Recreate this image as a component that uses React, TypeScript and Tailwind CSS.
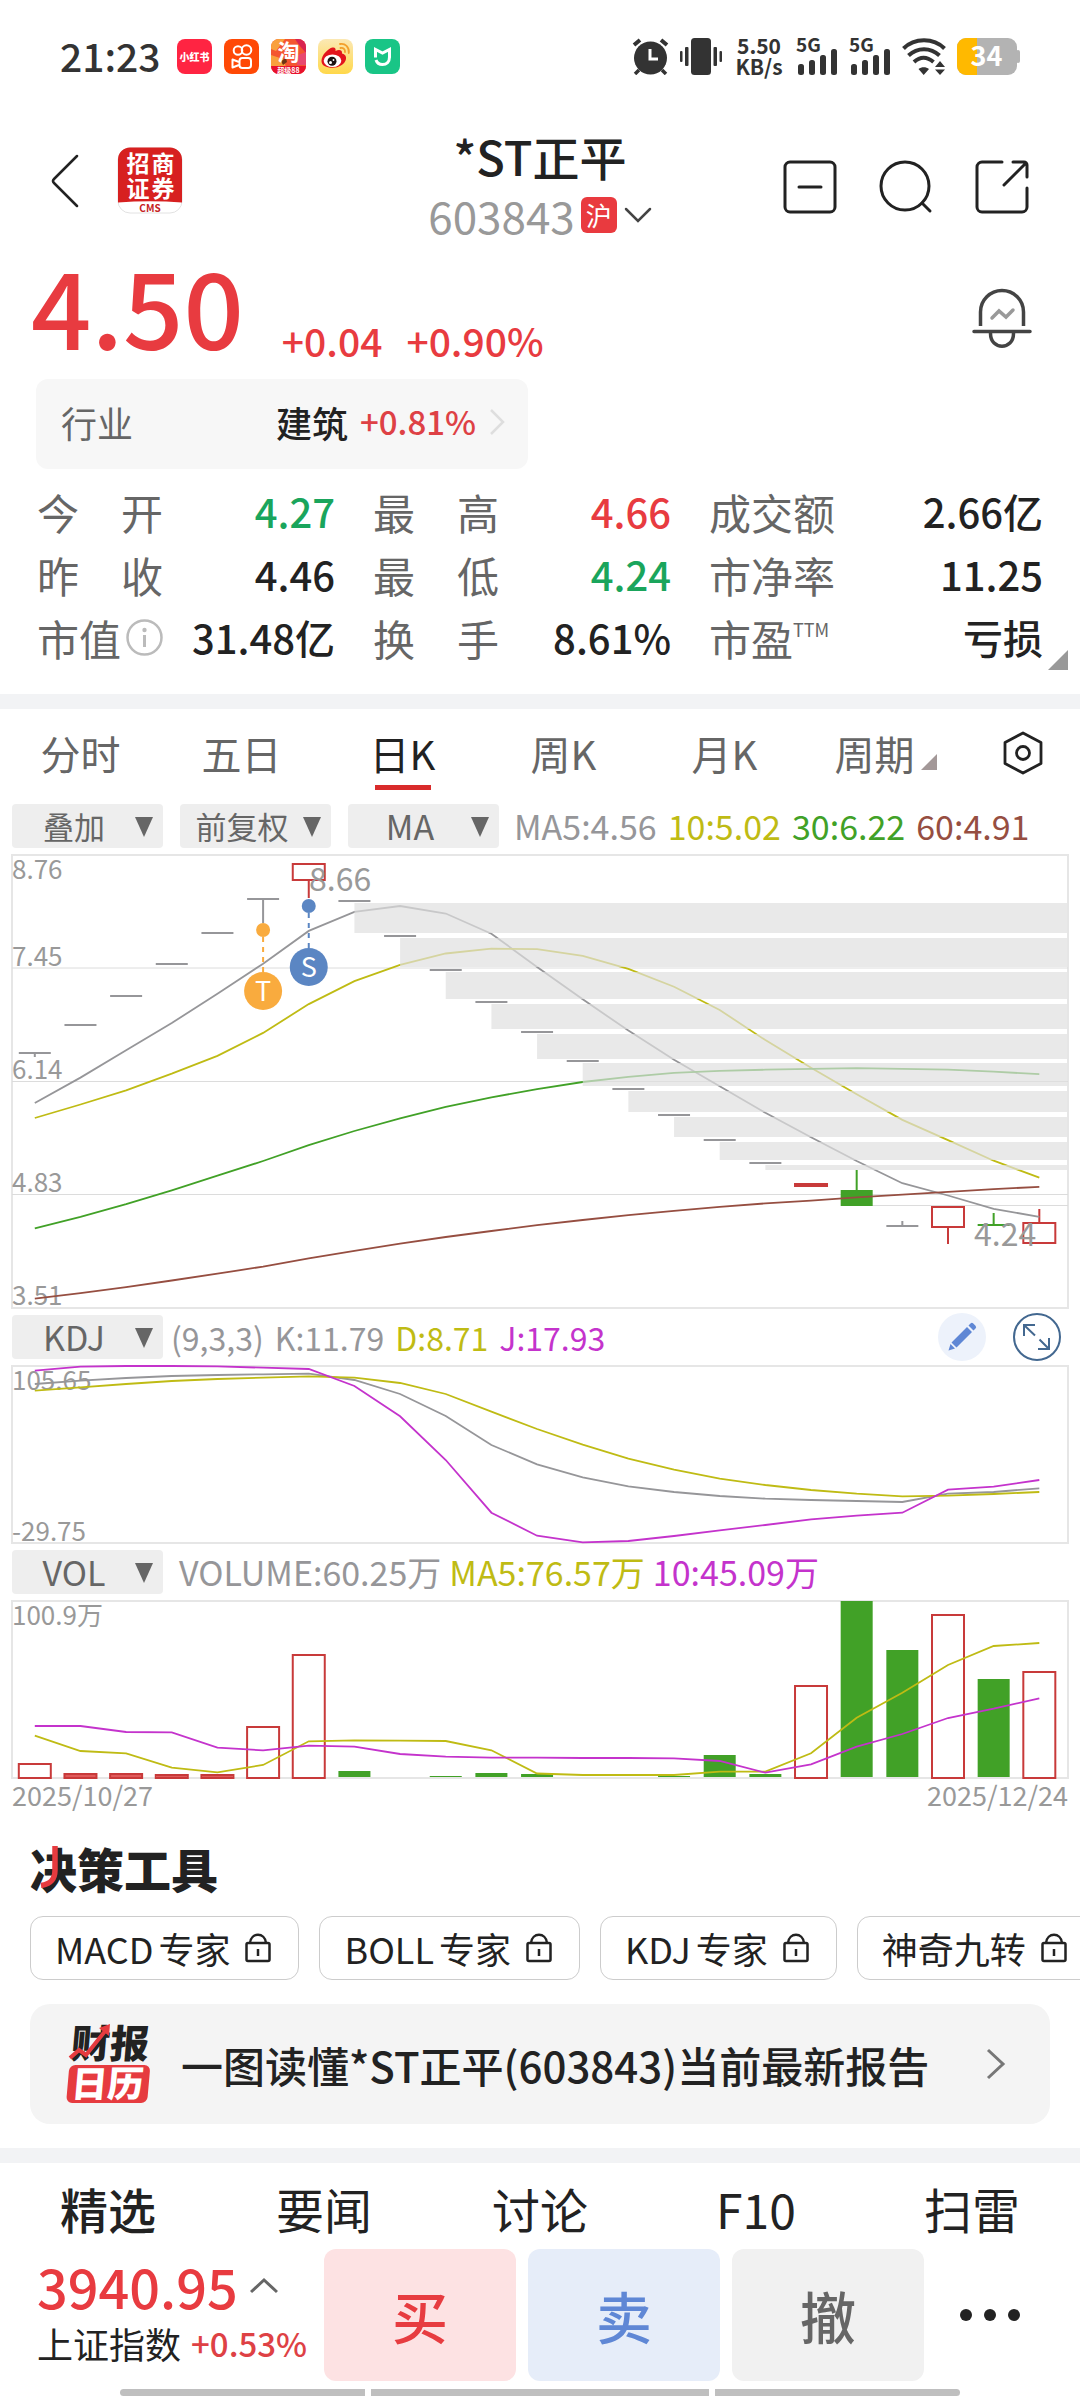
import { useState } from "react";
import type { ReactNode } from "react";

const GRAY = "#969699";
const YELLOW = "#bfbb14";
const GREEN = "#41a127";
const BROWN = "#964e41";
const PURPLE = "#c433cc";
const RED = "#c83a3a";

// Every panel shares the same 23 columns
const colX = (i: number) => 22.8 + i * 45.66;
const toPoints = (ys: number[]) => ys.map((y, i) => `${colX(i)},${y}`).join(" ");

const MA5 = [248, 222.6, 195.3, 168, 138.8, 108.7, 75.9, 56.9, 51, 58.5, 78.7, 111.9, 144.3, 175.6, 204.8, 231.3, 257.8, 282.3, 306, 328.2, 340.5, 353.9, 361.8];
const MA10 = [263, 249.5, 235.3, 218.7, 200.9, 177.9, 149.1, 126.1, 109.9, 98.5, 93.7, 94.1, 100.8, 113.9, 131.7, 155, 185.1, 212.7, 239.2, 264.9, 285.1, 305.7, 322.7];
const MA30 = [373.3, 361.8, 349.2, 335.3, 320.7, 306, 290.2, 276, 263.3, 251.9, 242.4, 234.1, 227, 221.8, 217.9, 215.9, 214.7, 213.9, 213.1, 213.9, 214.7, 216.7, 219.1];
const MA60 = [443.7, 438.1, 432.2, 425.5, 418.7, 411.6, 403.3, 395.8, 388.7, 382, 376, 370.1, 365, 360.2, 355.9, 351.9, 348.4, 345.6, 342.4, 339.7, 336.9, 334.1, 331.8];

const LINE_K = [18, 14.7, 12, 10, 9, 8.3, 7.7, 14, 28, 50, 79, 98.3, 111.3, 120.3, 126, 130, 132.7, 134, 135, 136, 127.7, 126, 122.3];
const LINE_D = [24.7, 21.3, 18, 15, 13, 11.7, 10.3, 11.7, 17, 28, 45.7, 63, 78.7, 92.7, 103.7, 112.7, 119, 124, 127.7, 130.3, 129.7, 128, 126];
const LINE_J = [4.7, 0.7, 0, 0, 0.3, 1.7, 3, 20, 50.3, 94, 146.7, 169.7, 176.3, 175, 170, 164.3, 159, 153.3, 149.7, 146.7, 123.7, 120.7, 114];

const VOL5 = [134.7, 150, 152.3, 166.7, 171.3, 164, 140.3, 139.3, 139.7, 140, 149.3, 172.5, 174, 174, 174, 170.7, 170.7, 152.3, 116.7, 91.7, 64, 45, 42];
const VOL10 = [125, 125, 131, 131.3, 146.7, 149.3, 144.7, 145.7, 153, 155.7, 156.7, 156.7, 157, 157, 157.3, 160, 171.7, 163.3, 145.7, 133, 117, 107.7, 97.3];

// Limit-up / limit-down days: one price all day, drawn as a dash
const FLAT_DAYS: [number, number][] = [
	[0, 198], [1, 170], [2, 141], [3, 109], [4, 78], [5, 44], [7, 46], [8, 81], [9, 115], [10, 147],
	[11, 177], [12, 206], [13, 234], [14, 260], [15, 285], [16, 308], [19, 371],
];

// Gaps left open by the falling days: [column, top, bottom]
const GAPS: [number, number, number][] = [
	[7, 48, 78], [8, 83, 112], [9, 117, 144], [10, 149, 174], [11, 179, 204],
	[12, 208, 231], [13, 236, 257], [14, 262, 282], [15, 287, 305], [16, 310, 315],
];

const VOLUME_BARS: { i: number; y: number; up: boolean }[] = [
	{ i: 0, y: 163, up: true },
	{ i: 1, y: 173, up: true },
	{ i: 2, y: 173, up: true },
	{ i: 3, y: 174, up: true },
	{ i: 4, y: 174, up: true },
	{ i: 5, y: 126, up: true },
	{ i: 6, y: 54, up: true },
	{ i: 7, y: 170, up: false },
	{ i: 9, y: 175, up: false },
	{ i: 10, y: 172, up: false },
	{ i: 11, y: 173, up: false },
	{ i: 14, y: 175, up: false },
	{ i: 15, y: 154, up: false },
	{ i: 16, y: 173, up: false },
	{ i: 17, y: 85, up: true },
	{ i: 18, y: 0, up: false },
	{ i: 19, y: 49, up: false },
	{ i: 20, y: 14, up: true },
	{ i: 21, y: 78, up: false },
	{ i: 22, y: 71, up: true },
];

function AppIcons() {
	return (
		<div className="flex items-center gap-3">
			<svg className="size-[35px]" viewBox="0 0 35 35">
				<title>小红书</title>
				<rect width="35" height="35" rx="8" fill="#ff2442" />
				<text x="17.5" y="21.5" textAnchor="middle" fontSize="10" fontWeight="900" fill="#fff">
					小红书
				</text>
			</svg>
			<svg className="size-[35px]" viewBox="0 0 35 35" fill="none" stroke="#fff" strokeWidth="2">
				<title>快手</title>
				<rect width="35" height="35" rx="8" fill="#ff4906" stroke="none" />
				<circle cx="14" cy="11.5" r="4.3" />
				<circle cx="22.5" cy="11" r="4.8" />
				<rect x="15.5" y="19" width="11.5" height="10" rx="2.8" />
				<path d="M15 23l-6.5-2.5v8L15 26" strokeLinejoin="round" />
			</svg>
			<svg className="size-[35px] overflow-visible" viewBox="0 0 35 35">
				<title>淘宝</title>
				<defs>
					<clipPath id="tao">
						<rect width="35" height="35" rx="8" />
					</clipPath>
				</defs>
				<g clipPath="url(#tao)">
					<rect width="35" height="35" fill="#f4552f" />
					<path d="M0 0h14L5 12 0 10zM0 16l12 4 3 8H0z" fill="#f9a03c" />
					<path d="M24 0h11v14L28 6z" fill="#d92350" />
					<path d="M27 16l8-3v13h-9z" fill="#e8486f" />
					<path d="M10 22l5-3 1 4-4 3z" fill="#6b3415" />
					<rect y="27" width="35" height="8" fill="#e8112d" />
				</g>
				<text x="17.5" y="21" textAnchor="middle" fontSize="22" fontWeight="700" fill="#fff">
					淘
				</text>
				<text x="17.5" y="33.5" textAnchor="middle" fontSize="7" fontWeight="700" fill="#fff">
					超级88
				</text>
			</svg>
			<svg className="size-[35px]" viewBox="0 0 35 35">
				<title>微博</title>
				<defs>
					<linearGradient id="weibo" x1="0" y1="0" x2="0" y2="1">
						<stop offset="0" stopColor="#fbe8b4" />
						<stop offset="1" stopColor="#ffd84a" />
					</linearGradient>
				</defs>
				<rect width="35" height="35" rx="8" fill="url(#weibo)" />
				<path
					d="M3.5 22C3.5 16 10 9.500 14.500 8.500c2.500-.5 3.500 1 3 3.500 3-1.500 7-1.500 6.500 2.500 3 1 4.500 2.500 4 5.500-.8 5-7 8.800-13.500 8.800S3.500 26.500 3.500 22z"
					fill="#e3141c"
				/>
				<ellipse cx="14.5" cy="21.7" rx="8.8" ry="6.3" fill="#fff" />
				<circle cx="14" cy="22.3" r="4.5" fill="#1a1313" />
				<circle cx="12.5" cy="23.5" r="1.5" fill="#fff" />
				<circle cx="15.5" cy="21" r=".9" fill="#fff" />
				<path d="M22 5c5-1 9.500 3 8.800 9M22.500 9c3-.5 4.800 1.500 4.500 4.200" fill="none" stroke="#f3a02c" strokeWidth="1.8" strokeLinecap="round" />
			</svg>
			<svg className="size-[35px]" viewBox="0 0 35 35" fill="none" stroke="#fff" strokeWidth="3">
				<title>米家</title>
				<rect width="35" height="35" rx="8" fill="#19c586" stroke="none" />
				<path d="M10.500 18.500V10.500l7 3.500 7-3.500V18.500" />
				<path d="M24.500 18c0 5-3 7.500-7 7.500-3 0-5.500-1.500-6.500-4.500" />
			</svg>
		</div>
	);
}

function Signal() {
	return (
		<svg className="h-[37px] w-[42px] overflow-visible" viewBox="0 0 42 37" fill="currentColor">
			<title>5G</title>
			<text x="0" y="14" fontSize="19" fontWeight="700">
				5G
			</text>
			<rect x="2" y="26" width="6" height="11" rx="2.5" />
			<rect x="13" y="22" width="6" height="15" rx="2.5" />
			<rect x="24" y="17" width="6" height="20" rx="2.5" />
			<rect x="35" y="11" width="6" height="26" rx="2.5" />
		</svg>
	);
}

function StatusBar() {
	return (
		<div className="flex h-[114px] items-center justify-between px-[60px] pb-[2px] text-[#333]">
			<div className="flex items-center gap-4">
				<span className="pb-[2px] font-medium text-[39px] leading-none">21:23</span>
				<AppIcons />
			</div>
			<div className="flex items-center gap-[11px]">
				<svg className="h-[37px] w-[37px]" viewBox="0 0 37 37" fill="none" stroke="currentColor">
					<title>闹钟</title>
					<circle cx="18.5" cy="20" r="16.5" fill="currentColor" stroke="none" />
					<path d="M2 7l6-5M35 7l-6-5" strokeWidth="4" />
					<path d="M7 32l-4 4M30 32l4 4" strokeWidth="3.5" />
					<path d="M18 11v10h8" stroke="#fff" strokeWidth="3" />
				</svg>
				<svg className="h-[37px] w-[42px]" viewBox="0 0 42 37" fill="currentColor">
					<title>振动</title>
					<rect x="11" width="20" height="37" rx="3.5" />
					<rect x="5" y="9" width="3.5" height="19" rx="1" />
					<rect x="33.5" y="9" width="3.5" height="19" rx="1" />
					<rect y="13" width="2.5" height="11" rx="1" />
					<rect x="39.5" y="13" width="2.5" height="11" rx="1" />
				</svg>
				<div className="w-[52px] text-center font-bold text-[21px] leading-[21px]">
					<div>5.50</div>
					<div>KB/s</div>
				</div>
				<Signal />
				<Signal />
				<svg className="h-[37px] w-[44px]" viewBox="0 0 44 37" fill="none" stroke="currentColor" strokeWidth="4">
					<title>Wi-Fi</title>
					<path d="M1.500 10.500c11-11 30-11 41 0M6.500 17.500c9-8.500 22-8.500 31 0M12 24c6-5.500 13-5.500 19.500 0" />
					<path d="M16.500 31c3-2.500 7.500-2.500 10.500 0l-5.300 6zM33 29l5-6 5 6zM33 31.500l5 5.500 5-5.500z" fill="currentColor" stroke="none" />
				</svg>
				<svg className="h-[37px] w-[63px] overflow-visible" viewBox="0 0 63 37">
					<title>电量 34%</title>
					<rect width="60" height="37" rx="9" fill="#b3b3b3" />
					<rect x="59" y="12" width="4" height="13" rx="2" fill="#b3b3b3" />
					<path d="M9 0h11v37H9a9 9 0 0 1-9-9V9a9 9 0 0 1 9-9z" fill="#ffb900" />
					<text x="29.5" y="28" textAnchor="middle" fontSize="27" fontWeight="700" fill="#fff">
						34
					</text>
				</svg>
			</div>
		</div>
	);
}

function Header() {
	return (
		<header className="grid h-[136px] grid-cols-[1fr_auto_1fr] items-center text-[#222]">
			<div className="flex items-center pb-[3px] pl-[51px]">
				<button type="button" aria-label="返回">
					<svg className="h-[54px] w-[28px]" viewBox="0 0 28 54" fill="none" stroke="currentColor" strokeWidth="2.5" strokeLinecap="round" strokeLinejoin="round">
						<path d="M26 2L3 25c-1.200 1.200-1.200 2.800 0 4l23 23" />
					</svg>
				</button>
				<svg className="ml-[38px] h-[67px] w-[66px] overflow-visible" viewBox="0 0 66 67">
					<title>招商证券</title>
					<rect x="1" y="1" width="64" height="65" rx="12" fill="#fff" stroke="#e2e2e2" />
					<path d="M13 .5h40a12 12 0 0 1 12 12V55.500q-32-2.500-64 0V12.500a12 12 0 0 1 12-12z" fill="#d72020" />
					<g fill="#fff" fontSize="23" fontWeight="700" textAnchor="middle">
						<text x="21" y="25">招</text>
						<text x="46" y="25">商</text>
						<text x="21" y="50">证</text>
						<text x="46" y="50">券</text>
					</g>
					<text x="33" y="64.5" textAnchor="middle" fontSize="10" fontWeight="700" fill="#c62222">
						CMS
					</text>
				</svg>
			</div>
			<div className="flex flex-col items-center pt-2">
				<h1 className="font-medium text-[47px] leading-[58px]">*ST正平</h1>
				<button type="button" className="flex items-center text-[#999] text-[44px] leading-[60px]">
					603843
					<span className="ml-[6px] flex size-9 items-center justify-center rounded-md bg-[#e93a3f] text-[26px] text-white leading-none">
						沪
					</span>
					<svg className="ml-[7px] h-4 w-7" viewBox="0 0 28 16" fill="none" stroke="#444" strokeWidth="2.5" strokeLinecap="round">
						<path d="M2 2l12 12L26 2" />
					</svg>
				</button>
			</div>
			<div className="flex items-center justify-end gap-[42px] pt-[10px] pr-[51px]">
				<button type="button" aria-label="删自选">
					<svg className="size-[54px]" viewBox="0 0 54 54" fill="none" stroke="currentColor" strokeWidth="3" strokeLinecap="round">
						<rect x="2" y="2" width="50" height="50" rx="5" />
						<path d="M16 27h22" />
					</svg>
				</button>
				<button type="button" aria-label="搜索">
					<svg className="size-[54px]" viewBox="0 0 54 54" fill="none" stroke="currentColor" strokeWidth="3" strokeLinecap="round">
						<circle cx="26" cy="26" r="24" />
						<path d="M43 43l8 8" />
					</svg>
				</button>
				<button type="button" aria-label="分享">
					<svg className="size-[54px]" viewBox="0 0 54 54" fill="none" stroke="currentColor" strokeWidth="3" strokeLinecap="round" strokeLinejoin="round">
						<path d="M27 2H7a5 5 0 0 0-5 5v40a5 5 0 0 0 5 5h40a5 5 0 0 0 5-5V28" />
						<path d="M38 2h11a3 3 0 0 1 3 3v12M51 3L29 25" />
					</svg>
				</button>
			</div>
		</header>
	);
}

function Stat({ label, value, color = "text-[#222]" }: { label: ReactNode; value: string; color?: string }) {
	return (
		<div className="flex items-center justify-between whitespace-nowrap">
			<dt className="flex w-[126px] justify-between text-[#666]">{label}</dt>
			<dd className={`font-medium text-[40px] ${color}`}>{value}</dd>
		</div>
	);
}

function Quote() {
	return (
		<section className="relative pb-[25px]">
			<div className="flex h-[110px] items-end pr-12 pl-[31px] text-[#e83b40]">
				<span className="font-medium text-[106px] leading-[112px]">4.50</span>
				<span className="ml-[38px] font-medium text-[39px] leading-[40px]">+0.04</span>
				<span className="ml-[24px] font-medium text-[39px] leading-[40px]">+0.90%</span>
				<button type="button" aria-label="股价提醒" className="mb-[12px] ml-auto">
					<svg className="size-[60px]" viewBox="0 0 60 60" fill="none" stroke="#444" strokeWidth="3.5" strokeLinecap="round">
						<path d="M8.500 38V24a21.500 21.500 0 0 1 43 0v14" strokeLinecap="butt" />
						<path d="M2 43.500h56M18.500 45.500c0 17 23 17 23 0" />
						<path d="M20 30l7-7 7 6 7-7" stroke="#999" />
					</svg>
				</button>
			</div>

			<button type="button" className="mt-[19px] ml-9 flex h-[90px] w-[492px] items-center rounded-[12px] bg-[#f7f7f7] pr-[23px] pb-1 pl-[25px] text-[36px]">
				<span className="text-[#666]">行业</span>
				<span className="ml-auto font-medium text-[#222]">建筑</span>
				<span className="ml-[12px] font-medium text-[#de4145] text-[33px]">+0.81%</span>
				<svg className="ml-[13px] h-[28px] w-[16px]" viewBox="0 0 16 28" fill="none" stroke="#dedede" strokeWidth="2.5">
					<path d="M2 2l12 12L2 26" />
				</svg>
			</button>

			<dl className="mt-[11px] grid grid-cols-[298fr_298fr_334fr] gap-x-[38px] px-[37px] text-[42px] leading-[63px]">
				<Stat label={<><span>今</span><span>开</span></>} value="4.27" color="text-[#1aa55c]" />
				<Stat label={<><span>最</span><span>高</span></>} value="4.66" color="text-[#e83b40]" />
				<Stat label="成交额" value="2.66亿" />
				<Stat label={<><span>昨</span><span>收</span></>} value="4.46" />
				<Stat label={<><span>最</span><span>低</span></>} value="4.24" color="text-[#1aa55c]" />
				<Stat label="市净率" value="11.25" />
				<Stat
					label={
						<>
							<span>市值</span>
							<svg className="size-[37px] shrink-0 self-center" viewBox="0 0 37 37" fill="none" stroke="#bbb" strokeWidth="2.5">
								<title>说明</title>
								<circle cx="18.5" cy="18.5" r="17" />
								<path d="M18.500 16v12" strokeWidth="3" />
								<circle cx="18.5" cy="11" r="2.2" fill="#bbb" stroke="none" />
							</svg>
						</>
					}
					value="31.48亿"
				/>
				<Stat label={<><span>换</span><span>手</span></>} value="8.61%" />
				<Stat
					label={
						<span className="flex">
							市盈<span className="text-[18px] leading-[46px]">TTM</span>
						</span>
					}
					value="亏损"
				/>
			</dl>
			<svg className="absolute right-3 bottom-6 size-[20px]" viewBox="0 0 20 20" fill="#999">
				<path d="M20 0v20H0z" />
			</svg>
		</section>
	);
}

const PERIODS = ["分时", "五日", "日K", "周K", "月K", "周期"];

function PeriodTabs() {
	const [active, setActive] = useState("日K");
	return (
		<nav className="flex h-[91px]">
			<div className="grid flex-1 grid-cols-6">
				{PERIODS.map((name) => (
					<button
						key={name}
						type="button"
						onClick={() => setActive(name)}
						className={`relative flex items-center justify-center pb-[3px] text-[40px] leading-none ${name === active ? "text-[#222]" : "text-[#666]"}`}
					>
						{name}
						{name === "周期" && (
							<svg className="mt-[18px] ml-[6px] size-4" viewBox="0 0 16 16" fill="#a39898">
								<path d="M16 0v16H0z" />
							</svg>
						)}
						{name === active && <span className="absolute bottom-[10px] h-[5px] w-14 bg-[#d92b2b]" />}
					</button>
				))}
			</div>
			<button type="button" aria-label="设置" className="flex w-[114px] items-center justify-center pb-1">
				<svg className="h-[44px] w-[40px]" viewBox="0 0 40 44" fill="none" stroke="#222" strokeWidth="2.8" strokeLinejoin="round">
					<path d="M20 2l18 9.500v21L20 42 2 32.500v-21z" />
					<circle cx="20" cy="22" r="6.5" />
				</svg>
			</button>
		</nav>
	);
}

function Dropdown({ label, options, size = "text-[34px]" }: { label: string; options: string[]; size?: string }) {
	return (
		<div className="relative w-[151px] shrink-0">
			<select
				aria-label={label}
				className={`block h-[44px] w-full appearance-none rounded-[4px] bg-[#eee] pr-[27px] text-center text-[#666] leading-[44px] ${size}`}
			>
				{options.map((option) => (
					<option key={option}>{option}</option>
				))}
			</select>
			<svg className="pointer-events-none absolute top-[13px] right-[10px] h-[20px] w-[18px]" viewBox="0 0 18 20" fill="#666">
				<path d="M0 0h18L9 20z" />
			</svg>
		</div>
	);
}

function CandleChart() {
	return (
		<svg className="my-[7px] block w-full overflow-visible" viewBox="0 0 1056 453" fill="none">
			<title>日K线</title>
			<rect x="0" y="0" width="1056" height="453" stroke="#e6e6e6" strokeWidth="2" />
			<path d="M0 113h1056M0 226.500h1056M0 339.500h1056M845 350.500h211" stroke="#dcdcdc" />
			<g fill="#999" fontSize="26">
				<text x="0" y="24">8.76</text>
				<text x="0" y="111">7.45</text>
				<text x="0" y="224">6.14</text>
				<text x="0" y="337">4.83</text>
				<text x="0" y="450">3.51</text>
			</g>

			<g stroke={GRAY} strokeWidth="2">
				{FLAT_DAYS.map(([i, y]) => (
					<path key={i} d={`M${colX(i) - 16} ${y}h32`} />
				))}
				<path d={`M${colX(0)} 198v4M${colX(5)} 44v24M${colX(19)} 371v-5`} />
			</g>
			<g stroke={RED} strokeWidth="2">
				<path d={`M${colX(6) - 16} 9h32v16h-32zM${colX(6)} 25v18`} />
				<path d={`M${colX(17) - 17} 330h34`} strokeWidth="4" />
				<path d={`M${colX(20) - 16} 352h32v20h-32zM${colX(20)} 372v17`} />
				<path d={`M${colX(22) - 16} 368h32v20h-32zM${colX(22)} 368v-14`} />
			</g>
			<g stroke={GREEN} strokeWidth="2">
				<rect x={colX(18) - 16} y="335" width="32" height="16" fill={GREEN} stroke="none" />
				<path d={`M${colX(18)} 335v-20M${colX(21) - 16} 370h32M${colX(21)} 370v-12`} />
			</g>

			<g strokeWidth="1.8">
				<polyline points={toPoints(MA5)} stroke={GRAY} />
				<polyline points={toPoints(MA10)} stroke={YELLOW} />
				<polyline points={toPoints(MA30)} stroke={GREEN} />
				<polyline points={toPoints(MA60)} stroke={BROWN} />
			</g>
			<g fill="#dfdfdf" fillOpacity=".69">
				{GAPS.map(([i, top, bottom]) => (
					<rect key={i} x={colX(i)} y={top} width={1055 - colX(i)} height={bottom - top} />
				))}
			</g>

			<g fill="#999" fontSize="32">
				<text x="297" y="36">8.66</text>
				<text x="962" y="391">4.24</text>
			</g>

			{/* Trade markers */}
			<g textAnchor="middle" fontSize="27">
				<path d={`M${colX(5)} 82v35`} stroke="#f9ab3e" strokeWidth="2" strokeDasharray="5 5" />
				<circle cx={colX(5)} cy="75" r="7" fill="#f9ab3e" />
				<circle cx={colX(5)} cy="136" r="19" fill="#f9ab3e" />
				<text x={colX(5)} y="146" fill="#fff">T</text>
				<path d={`M${colX(6)} 58v35`} stroke="#5b86c3" strokeWidth="2" strokeDasharray="5 5" />
				<circle cx={colX(6)} cy="51" r="7" fill="#5b86c3" />
				<circle cx={colX(6)} cy="112" r="19" fill="#5b86c3" />
				<text x={colX(6)} y="122" fill="#fff">S</text>
			</g>
		</svg>
	);
}

function KdjChart() {
	return (
		<svg className="my-[7px] block w-full overflow-visible" viewBox="0 0 1056 177" fill="none">
			<title>KDJ</title>
			<rect x="0" y="0" width="1056" height="177" stroke="#e6e6e6" strokeWidth="2" />
			<g fill="#999" fontSize="26">
				<text x="0" y="24">105.65</text>
				<text x="0" y="175">-29.75</text>
			</g>
			<g strokeWidth="1.8">
				<polyline points={toPoints(LINE_K)} stroke={GRAY} />
				<polyline points={toPoints(LINE_D)} stroke={YELLOW} />
				<polyline points={toPoints(LINE_J)} stroke={PURPLE} />
			</g>
		</svg>
	);
}

function VolumeChart() {
	return (
		<svg className="mt-[7px] block w-full overflow-visible" viewBox="0 0 1056 177" fill="none">
			<title>成交量</title>
			<rect x="0" y="0" width="1056" height="177" stroke="#e6e6e6" strokeWidth="2" />
			<text x="0" y="24" fill="#999" fontSize="26">
				100.9万
			</text>
			{VOLUME_BARS.map(({ i, y, up }) =>
				up ? (
					<rect key={i} x={colX(i) - 16} y={y} width="32" height={177 - y} stroke={RED} strokeWidth="2" fill={y > 170 ? "#e05a5a" : "none"} />
				) : (
					<rect key={i} x={colX(i) - 16} y={y} width="32" height={176 - y} fill={GREEN} />
				),
			)}
			<g strokeWidth="1.8">
				<polyline points={toPoints(VOL5)} stroke={YELLOW} />
				<polyline points={toPoints(VOL10)} stroke={PURPLE} />
			</g>
		</svg>
	);
}

function Charts() {
	return (
		<section className="px-3 text-[34px] leading-[44px]">
			<div className="mt-[4px] flex h-[44px] items-center whitespace-nowrap">
				<div className="flex gap-[17px]">
					<Dropdown label="叠加" options={["叠加"]} size="text-[31px]" />
					<Dropdown label="复权" options={["前复权", "后复权", "不复权"]} size="text-[31px]" />
					<Dropdown label="主图指标" options={["MA", "BOLL"]} />
				</div>
				<div className="ml-[15px] flex gap-[11px]">
					<span className="text-[#969699]">MA5:4.56</span>
					<span className="text-[#bfbb14]">10:5.02</span>
					<span className="text-[#41a127]">30:6.22</span>
					<span className="text-[#964e41]">60:4.91</span>
				</div>
			</div>
			<CandleChart />

			<div className="flex h-[44px] items-center whitespace-nowrap">
				<Dropdown label="副图指标一" options={["KDJ", "MACD", "RSI"]} />
				<div className="ml-[8px] flex gap-[11px] text-[32px]">
					<span className="text-[#969699]">(9,3,3)</span>
					<span className="text-[#969699]">K:11.79</span>
					<span className="text-[#bfbb14]">D:8.71</span>
					<span className="text-[#c433cc]">J:17.93</span>
				</div>
				<div className="ml-auto flex gap-[27px] pr-[7px]">
					<button type="button" aria-label="画线" className="flex size-[48px] items-center justify-center rounded-full bg-[#edf2fb]">
						<svg className="size-[30px]" viewBox="0 0 30 30" fill="#5f87d5">
							<path d="M20 5l5 5L9.500 25.500l-5-5zM21.500 3.500l2-2a2 2 0 0 1 2.800 0l2.200 2.200a2 2 0 0 1 0 2.800l-2 2zM3.500 22l4.500 4.500-6.500 2z" />
						</svg>
					</button>
					<button type="button" aria-label="全屏">
						<svg className="size-[48px]" viewBox="0 0 48 48" fill="none" stroke="#436890" strokeWidth="2">
							<circle cx="24" cy="24" r="23" />
							<path d="M11 23V12h11M11.500 12.500l10.500 10M36 25v11H25M35.500 35.500l-9-9" />
						</svg>
					</button>
				</div>
			</div>
			<KdjChart />

			<div className="flex h-[44px] items-center whitespace-nowrap">
				<Dropdown label="副图指标二" options={["VOL", "AMO"]} />
				<div className="ml-[16px] flex gap-2">
					<span className="text-[#969699]">VOLUME:60.25万</span>
					<span className="text-[#bfbb14]">MA5:76.57万</span>
					<span className="text-[#c433cc]">10:45.09万</span>
				</div>
			</div>
			<VolumeChart />
			<div className="flex h-[34px] justify-between text-[#999] text-[27px] leading-[34px]">
				<time>2025/10/27</time>
				<time>2025/12/24</time>
			</div>
		</section>
	);
}

const TOOLS = [["MACD", "专家"], ["BOLL", "专家"], ["KDJ", "专家"], ["", "神奇九转"]];

function Tools() {
	return (
		<section className="pt-[24px] pb-6 text-[#222]">
			<h2 className="relative ml-[30px] w-fit font-black text-[47px] leading-[64px]">
				决策工具
				<svg className="absolute top-[10px] left-[9px] h-[42px] w-[20px]" viewBox="0 0 20 42" fill="none" stroke="#e63b3f" strokeWidth="5.5">
					<path d="M16 0v24c0 9-4 14-14 15.500" />
				</svg>
			</h2>
			<div className="mt-4 flex gap-[20px] overflow-hidden pl-[30px]">
				{TOOLS.map(([code, name]) => (
					<button
						key={code + name}
						type="button"
						className="flex h-[64px] shrink-0 items-center rounded-[13px] border border-[#ccc] pr-[27px] pl-[24px] text-[36px]"
					>
						{code && <span className="mr-[5px]">{code}</span>}
						{name}
						<svg className="ml-[15px] h-[30px] w-[26px]" viewBox="0 0 26 30" fill="none" stroke="currentColor" strokeWidth="2.5">
							<rect x="1.5" y="10" width="23" height="18" rx="1.5" />
							<path d="M5 10c1-11 15-11 16 0M13 16v7" />
						</svg>
					</button>
				))}
			</div>
			<a href="#report" className="mx-[30px] mt-6 flex h-[120px] items-center rounded-[20px] bg-[#f4f4f4] pr-[44px] pl-[35px]">
				<svg className="h-[80px] w-[86px] overflow-visible" viewBox="0 0 86 80">
					<title>财报日历</title>
					<g transform="skewX(-5)">
						<text x="8" y="34" fontSize="39" fontWeight="900" fill="#222">
							财报
						</text>
						<rect x="8" y="41" width="81" height="38" rx="6" fill="#e63b3f" />
						<text x="48" y="73" textAnchor="middle" fontSize="36" fontWeight="900" fill="#fff">
							日历
						</text>
					</g>
					<path d="M5 34l9-8 7 5L41 6" fill="none" stroke="#e63b3f" strokeWidth="4" />
					<path d="M34 4l11-4-1 12z" fill="#e63b3f" />
				</svg>
				<span className="ml-[30px] whitespace-nowrap font-medium text-[42px]">一图读懂*ST正平(603843)当前最新报告</span>
				<svg className="ml-auto h-[32px] w-[20px]" viewBox="0 0 20 32" fill="none" stroke="#777" strokeWidth="3">
					<path d="M2 2l15 14L2 30" />
				</svg>
			</a>
		</section>
	);
}

function Footer() {
	return (
		<footer className="text-[#222]">
			<nav className="grid h-[86px] grid-cols-5 pt-[3px] text-[48px] leading-none">
				{["精选", "要闻", "讨论", "F10", "扫雷"].map((name, i) => (
					<button key={name} type="button" className={i === 0 ? "font-medium" : ""}>
						{name}
					</button>
				))}
			</nav>
			<div className="flex h-[132px] gap-3">
				<button type="button" className="w-[312px] shrink-0 pb-[11px] pl-[37px] text-left">
					<span className="flex items-center font-medium text-[#e83b40] text-[54px] leading-[66px]">
						3940.95
						<svg className="ml-[12px] h-[17px] w-[28px]" viewBox="0 0 28 17" fill="none" stroke="#666" strokeWidth="3">
							<path d="M1 15L14 3l13 12" />
						</svg>
					</span>
					<span className="flex items-center whitespace-nowrap text-[36px] leading-[48px]">
						上证指数
						<span className="ml-[10px] font-medium text-[#de4145] text-[33px]">+0.53%</span>
					</span>
				</button>
				<div className="grid flex-1 grid-cols-3 gap-3 font-medium text-[56px] leading-none">
					<button type="button" className="rounded-[12px] bg-[#fde2e3] text-[#e73c40]">
						买
					</button>
					<button type="button" className="rounded-[12px] bg-[#e6edf9] text-[#5f87d5]">
						卖
					</button>
					<button type="button" className="rounded-[12px] bg-[#f1f1f1] text-[#666]">
						撤
					</button>
				</div>
				<button type="button" aria-label="更多" className="flex w-[144px] shrink-0 items-center justify-center gap-3 pr-[36px]">
					<span className="size-3 rounded-full bg-[#222]" />
					<span className="size-3 rounded-full bg-[#222]" />
					<span className="size-3 rounded-full bg-[#222]" />
				</button>
			</div>
			<div className="mt-2 mb-[3px] flex gap-[6px] px-[120px]">
				<span className="h-[7px] flex-[245] rounded-l-full bg-[#bfbfbf]" />
				<span className="h-[7px] flex-[338] bg-[#bfbfbf]" />
				<span className="h-[7px] flex-[245] rounded-r-full bg-[#bfbfbf]" />
			</div>
		</footer>
	);
}

export default function App() {
	return (
		<main className="overflow-hidden bg-white font-['Noto_Sans_CJK_SC','Liberation_Sans',sans-serif]">
			<StatusBar />
			<Header />
			<Quote />
			<div className="h-[15px] bg-[#f2f3f5]" />
			<PeriodTabs />
			<Charts />
			<Tools />
			<div className="h-[15px] bg-[#f2f3f5]" />
			<Footer />
		</main>
	);
}
